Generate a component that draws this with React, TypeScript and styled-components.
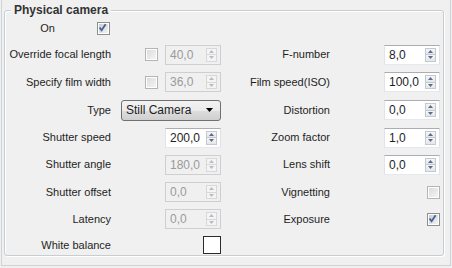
import React from "react";
import styled, { createGlobalStyle, css } from "styled-components";

const GlobalStyle = createGlobalStyle`
  html, body { margin: 0; padding: 0; background: #f0f0f0; }
  body { font-family: "Liberation Sans", Arial, sans-serif; font-size: 11px; color: #1e1e1e; }
`;

const Frame = styled.div`
  box-sizing: border-box;
  margin-left: 1px;
  width: 450px;
  height: 266px;
  border: 1px solid #cfd3d6;
  border-top: none;
  padding: 10px 0 0 2px;
`;

const Group = styled.div`
  position: relative;
  box-sizing: border-box;
  width: 440px;
  height: 246px;
  border: 1px solid #c7ced3;
  border-radius: 3px;
  box-shadow: inset 1px 1px 0 #fff, 1px 1px 0 #fff;
  padding-top: 4px;
`;

const Title = styled.div`
  position: absolute;
  top: -8px;
  left: 6px;
  padding: 0 3px;
  background: #f0f0f0;
  font-weight: bold;
  font-size: 12px;
  line-height: 14px;
  color: #333;
`;

const Grid = styled.div`
  display: grid;
  grid-template-columns: 107px 109px 110px 109px;
  grid-template-rows: 26px 27px 28px 28px 27px 27px 28px 26px 26px;
  align-items: center;
`;

const Label = styled.div<{ $col: number }>`
  grid-column: ${(p) => p.$col};
  text-align: right;
  padding-right: 1px;
  white-space: nowrap;
  line-height: 13px;
`;

const Cell = styled.div<{ $col: number }>`
  grid-column: ${(p) => p.$col};
  display: flex;
  justify-content: flex-end;
  align-items: center;
  gap: 7px;
`;

const OnCell = styled.div`
  grid-column: 1;
  display: flex;
  justify-content: flex-end;
  align-items: center;
  gap: 42px;
  padding-right: 2px;
`;

const CheckBox = styled.div<{ $muted?: boolean }>`
  box-sizing: border-box;
  width: 13px;
  height: 13px;
  border: 1px solid ${(p) => (p.$muted ? "#b4b4b4" : "#8e8f8f")};
  background: #fff;
  padding: 1px;
  display: flex;
`;

const CheckInner = styled.div<{ $muted?: boolean }>`
  flex: 1;
  position: relative;
  background: ${(p) =>
    p.$muted
      ? "linear-gradient(135deg, #dcdcdc, #f4f4f4)"
      : "linear-gradient(135deg, #c9cdd3, #f2f3f4)"};
  svg { position: absolute; left: -1px; top: -1px; }
`;

const Spin = styled.div<{ $disabled?: boolean }>`
  box-sizing: border-box;
  width: 56px;
  height: 20px;
  display: flex;
  align-items: center;
  padding: 2px 3px 2px 4px;
  border: 1px solid;
  ${(p) =>
    p.$disabled
      ? css`
          background: #f0f0f0;
          border-color: #cfcfcf;
          color: #9a9a9a;
        `
      : css`
          background: #fff;
          border-color: #abadb3 #dfe3e8 #e3e9ef #e2e3ea;
          color: #1e1e1e;
        `}
`;

const SpinValue = styled.span`
  flex: 1;
  font-size: 12px;
  line-height: 14px;
`;

const SpinButtons = styled.div`
  display: flex;
  flex-direction: column;
  width: 11px;
  height: 100%;
`;

const SpinBtn = styled.div<{ $disabled?: boolean }>`
  flex: 1;
  box-sizing: border-box;
  border: 1px solid ${(p) => (p.$disabled ? "#d8d8d8" : "#c4c8cf")};
  background: ${(p) =>
    p.$disabled ? "#f4f4f4" : "linear-gradient(#f6f6f6, #e4e6ea)"};
  display: flex;
  align-items: center;
  justify-content: center;
  & + & { border-top: none; }
`;

const Combo = styled.div`
  box-sizing: border-box;
  width: 100px;
  height: 21px;
  border: 1px solid #707070;
  border-radius: 3px;
  background: linear-gradient(#f2f2f2 0%, #ebebeb 50%, #dddddd 51%, #cfcfcf 100%);
  display: flex;
  align-items: center;
  justify-content: space-between;
  padding: 0 7px 0 4px;
  font-size: 12px;
`;

const ColorSwatch = styled.div`
  box-sizing: border-box;
  width: 18px;
  height: 18px;
  background: #fff;
  border: 1px solid #2b2b2b;
`;

const Arrow = ({ up, color }: { up?: boolean; color: string }) => (
  <svg width="5" height="3" viewBox="0 0 5 3">
    <path d={up ? "M0 3 L2.5 0 L5 3 Z" : "M0 0 L5 0 L2.5 3 Z"} fill={color} />
  </svg>
);

const Check = ({ checked, muted }: { checked?: boolean; muted?: boolean }) => (
  <CheckBox $muted={muted}>
    <CheckInner $muted={muted}>
      {checked && (
        <svg width="9" height="9" viewBox="0 0 9 9">
          <path d="M1.5 4.5 L3.6 7.2 L7.6 1.2" fill="none" stroke="#4a5f97" strokeWidth="1.8" />
        </svg>
      )}
    </CheckInner>
  </CheckBox>
);

const SpinBox = ({ value, disabled }: { value: string; disabled?: boolean }) => {
  const c = disabled ? "#b7bcc4" : "#5a6b8c";
  return (
    <Spin $disabled={disabled}>
      <SpinValue>{value}</SpinValue>
      <SpinButtons>
        <SpinBtn $disabled={disabled}>
          <Arrow up color={c} />
        </SpinBtn>
        <SpinBtn $disabled={disabled}>
          <Arrow color={c} />
        </SpinBtn>
      </SpinButtons>
    </Spin>
  );
};

type Ctl =
  | { kind: "spin"; value: string; disabled?: boolean; check?: boolean }
  | { kind: "combo"; value: string }
  | { kind: "check"; checked?: boolean; muted?: boolean }
  | { kind: "swatch" };

const leftRows: [string, Ctl][] = [
  ["Override focal length", { kind: "spin", value: "40,0", disabled: true, check: true }],
  ["Specify film width", { kind: "spin", value: "36,0", disabled: true, check: true }],
  ["Type", { kind: "combo", value: "Still Camera" }],
  ["Shutter speed", { kind: "spin", value: "200,0" }],
  ["Shutter angle", { kind: "spin", value: "180,0", disabled: true }],
  ["Shutter offset", { kind: "spin", value: "0,0", disabled: true }],
  ["Latency", { kind: "spin", value: "0,0", disabled: true }],
  ["White balance", { kind: "swatch" }],
];

const rightRows: [string, Ctl][] = [
  ["F-number", { kind: "spin", value: "8,0" }],
  ["Film speed(ISO)", { kind: "spin", value: "100,0" }],
  ["Distortion", { kind: "spin", value: "0,0" }],
  ["Zoom factor", { kind: "spin", value: "1,0" }],
  ["Lens shift", { kind: "spin", value: "0,0" }],
  ["Vignetting", { kind: "check", muted: true }],
  ["Exposure", { kind: "check", checked: true }],
];

const renderCtl = (c: Ctl) => {
  switch (c.kind) {
    case "spin":
      return (
        <>
          {c.check && <Check muted />}
          <SpinBox value={c.value} disabled={c.disabled} />
        </>
      );
    case "combo":
      return (
        <Combo>
          <span>{c.value}</span>
          <svg width="7" height="4" viewBox="0 0 7 4">
            <path d="M0 0 L7 0 L3.5 4 Z" fill="#000" />
          </svg>
        </Combo>
      );
    case "check":
      return <Check checked={c.checked} muted={c.muted} />;
    case "swatch":
      return <ColorSwatch />;
  }
};

export default function App() {
  return (
    <>
      <GlobalStyle />
      <Frame>
        <Group>
          <Title>Physical camera</Title>
          <Grid>
            <OnCell>
              <span>On</span>
              <Check checked />
            </OnCell>
            {leftRows.map(([label, ctl], i) => (
              <React.Fragment key={label}>
                <Label $col={1} style={{ gridRow: i + 2 }}>{label}</Label>
                <Cell $col={2} style={{ gridRow: i + 2 }}>{renderCtl(ctl)}</Cell>
              </React.Fragment>
            ))}
            {rightRows.map(([label, ctl], i) => (
              <React.Fragment key={label}>
                <Label $col={3} style={{ gridRow: i + 2 }}>{label}</Label>
                <Cell $col={4} style={{ gridRow: i + 2 }}>{renderCtl(ctl)}</Cell>
              </React.Fragment>
            ))}
          </Grid>
        </Group>
      </Frame>
    </>
  );
}
